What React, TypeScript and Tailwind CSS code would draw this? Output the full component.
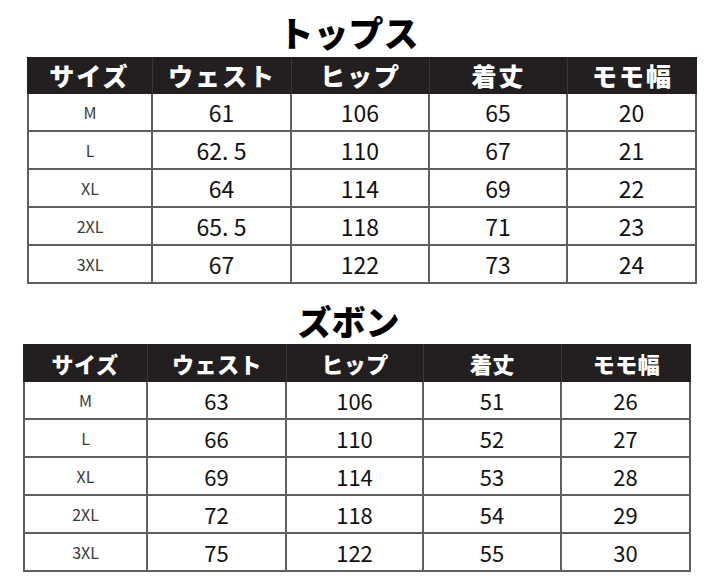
import React from "react";

const FONT = { fontFamily: '"Noto Sans CJK JP", "Noto Sans", sans-serif' };

const headers = ["サイズ", "ウェスト", "ヒップ", "着丈", "モモ幅"];

const topRows = [
  ["M", "61", "106", "65", "20"],
  ["L", "62. 5", "110", "67", "21"],
  ["XL", "64", "114", "69", "22"],
  ["2XL", "65. 5", "118", "71", "23"],
  ["3XL", "67", "122", "73", "24"],
];

const bottomRows = [
  ["M", "63", "106", "51", "26"],
  ["L", "66", "110", "52", "27"],
  ["XL", "69", "114", "53", "28"],
  ["2XL", "72", "118", "54", "29"],
  ["3XL", "75", "122", "55", "30"],
];

function TopTable() {
  return (
    <div className="ml-[27px] w-[670px]">
      <div className="grid grid-cols-[126px_139px_138px_138px_129px] h-[37px] bg-[#231f20]">
        {headers.map((h) => (
          <div
            key={h}
            className="flex items-center justify-center text-white text-[25px] font-black tracking-[2px] leading-none border-r border-[#3a3637] last:border-r-0"
          >
            {h}
          </div>
        ))}
      </div>
      {topRows.map((r, i) => (
        <div
          key={i}
          className="grid grid-cols-[126px_139px_138px_138px_129px] h-[38px]"
        >
          {r.map((c, j) => (
            <div
              key={j}
              className={
                "flex items-center justify-center border-r-2 border-b-2 border-[#5f5f5f] leading-none " +
                (j === 0
                  ? "border-l-2 text-[16px] text-[#3a3a3a] font-normal"
                  : "text-[23px] text-[#111111] font-normal")
              }
            >
              {c}
            </div>
          ))}
        </div>
      ))}
    </div>
  );
}

function BottomTable() {
  return (
    <div className="ml-[23px] w-[668px]">
      <div className="grid grid-cols-[125px_139px_137px_138px_129px] h-[38px] bg-[#231f20]">
        {headers.map((h) => (
          <div
            key={h}
            className="flex items-center justify-center text-white text-[22px] font-black tracking-[0.5px] leading-none border-r border-[#3a3637] last:border-r-0"
          >
            {h}
          </div>
        ))}
      </div>
      {bottomRows.map((r, i) => (
        <div
          key={i}
          className="grid grid-cols-[125px_139px_137px_138px_129px] h-[38px]"
        >
          {r.map((c, j) => (
            <div
              key={j}
              className={
                "flex items-center justify-center border-r-2 border-b-2 border-[#5f5f5f] leading-none " +
                (j === 0
                  ? "border-l-2 text-[16px] text-[#3a3a3a] font-normal"
                  : "text-[22px] text-[#111111] font-normal")
              }
            >
              {c}
            </div>
          ))}
        </div>
      ))}
    </div>
  );
}

export default function App() {
  return (
    <div className="w-[720px] h-[586px] bg-white flex flex-col overflow-hidden" style={FONT}>
      <div className="h-[57px] pt-[6px] pr-[23px] flex items-center justify-center">
        <span className="text-[35px] font-black leading-none text-black">トップス</span>
      </div>
      <TopTable />
      <div className="h-[60px] pt-[18px] pb-[4px] pr-[23px] flex items-center justify-center">
        <span className="text-[34px] font-black leading-none text-black">ズボン</span>
      </div>
      <BottomTable />
    </div>
  );
}
